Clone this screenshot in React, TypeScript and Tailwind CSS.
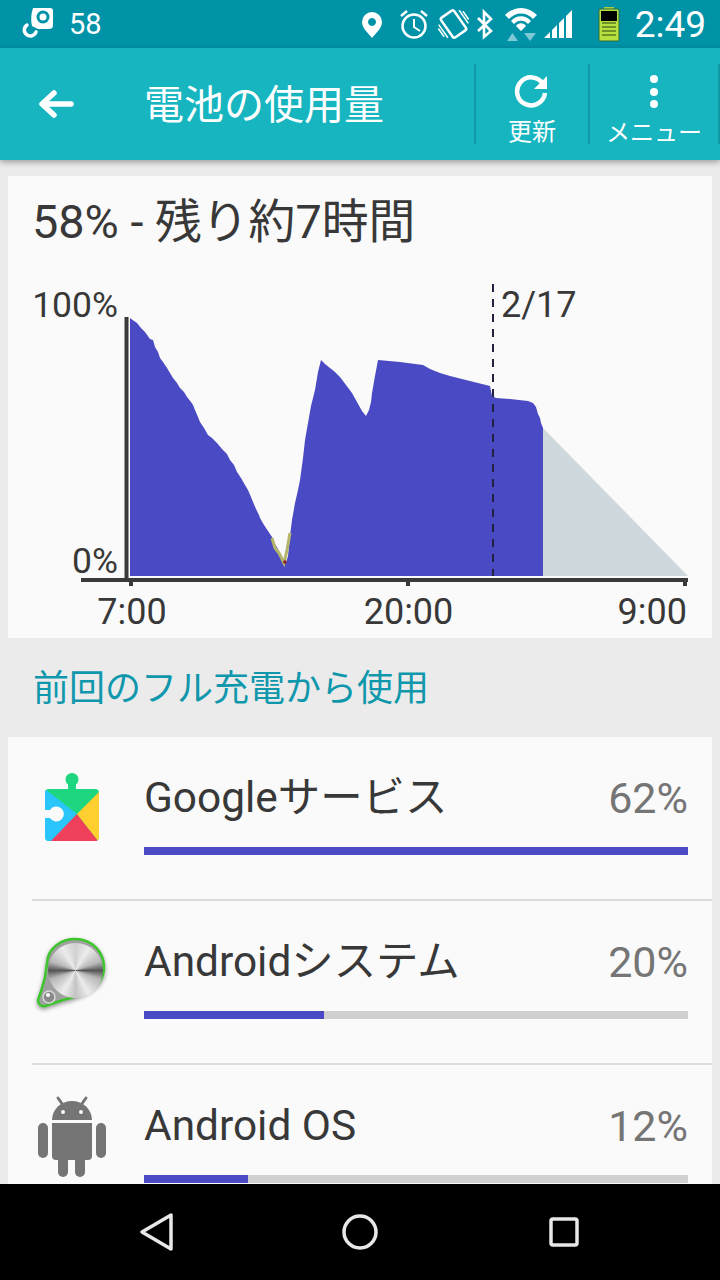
const font = "font-['Roboto','Noto_Sans_CJK_JP',sans-serif]";

const chartArea =
  "130,318 134,321 137,323 141,328 145,332 150,339 153,340 155,347 158,352 160,358 163,362 167,368 170,373 173,378 177,383 180,388 184,392 187,397 191,402 193,405 195,410 198,417 200,422 204,428 208,435 212,438 217,443 222,449 227,454 230,460 234,465 237,472 241,478 245,485 248,490 251,497 253,502 256,509 259,515 260,518 264,525 268,531 272,537 275,544 278,549 281,555 283,561 286,563 288,556 290,536 292,520 295,503 298,490 300,480 303,458 305,440 308,423 311,406 315,390 318,372 321,360 325,364 330,368 335,372 340,377 346,385 352,393 357,402 362,411 366,416 369,410 371,402 372,393 375,376 378,360 400,362 423,365 430,369 440,373 450,376 470,381 490,386 492,396 496,398 510,399 528,401 533,403 536,407 538,414 540,418 541,423 543,428 543,576 130,576";

function StatusLeft() {
  return (
    <svg width="36" height="48" viewBox="20 0 36 48">
      <path d="M33 8 H50 Q53 8 53 11 V25 Q53 29 49 29 H38 L32 26 Q30 17 33 8 Z" fill="#fff" />
      <circle cx="43" cy="17" r="6.5" fill="#0093a8" />
      <circle cx="43" cy="17" r="3.5" fill="#fff" />
      <path d="M27 25 A6 6 0 1 0 36 32" fill="none" stroke="#fff" strokeWidth="3.5" strokeLinecap="round" />
    </svg>
  );
}

function StatusIcons() {
  return (
    <svg width="268" height="48" viewBox="356 0 268 48">
      {/* location */}
      <path fillRule="evenodd" d="M372 12 a10 10 0 0 1 10 10 c0 6 -6 11 -10 16 c-4 -5 -10 -10 -10 -16 a10 10 0 0 1 10 -10 Z M372 18 a4 4 0 1 0 0.01 0 Z" fill="#fff" />
      {/* alarm */}
      <circle cx="414" cy="26" r="11.5" fill="none" stroke="#fff" strokeWidth="2.5" />
      <path d="M414 19 V27 L420 31" fill="none" stroke="#fff" strokeWidth="2" />
      <path d="M401 16 L407 11 M427 16 L421 11" stroke="#fff" strokeWidth="2.5" />
      {/* vibrate */}
      <g transform="rotate(-35 453.500 24)" fill="none" stroke="#fff">
        <rect x="445.500" y="12" width="16" height="24" rx="2" strokeWidth="2.5" />
        <path d="M441 16 V32 M438.500 19 V29 M466 16 V32 M468.500 19 V29" strokeWidth="1.5" />
      </g>
      {/* bluetooth */}
      <path d="M478 18 L491 31 L484 37 V12 L491 19 L478 31" fill="none" stroke="#fff" strokeWidth="2.6" />
      {/* wifi */}
      <path d="M505 15 A22 22 0 0 1 537 15 L533 19 A16 16 0 0 0 509 19 Z M511 21 A13 13 0 0 1 531 21 L528 24 A9 9 0 0 0 514 24 Z M516 26 A6 6 0 0 1 526 26 L521 31 Z" fill="#fff" />
      <path d="M512.500 33 L507 41 H518 Z M530 41 L524 33 H536 Z" fill="#7cc8d4" />
      {/* signal */}
      <path d="M544 38 L550 32 V38 Z M552 38 V30 L557 25 V38 Z M559 38 V23 L564 18 V38 Z M566 38 V16 L572 10 V38 Z" fill="#fff" />
      {/* battery */}
      <rect x="604" y="7" width="10" height="3" fill="#a8d040" />
      <rect x="599" y="9" width="20" height="32" rx="1" fill="#b5e040" stroke="#2f6b40" />
      <rect x="601" y="11" width="16" height="10" fill="#000" />
      <path d="M602 23 H616 M602 27 H616 M602 31 H616 M602 35 H616" stroke="#5a7a20" strokeWidth="1.4" />
    </svg>
  );
}

function BatteryChart() {
  const labelClass = "fill-[#383838]";
  return (
    <svg width="704" height="358" viewBox="8 280 704 358" className="block">
      <polygon points={chartArea} fill="#4a4ac4" />
      <polygon points="543,428 688,576 543,576" fill="#cfd8dc" />
      <polyline points="272,538 275,548 279,553 284,563 287,550 290,533" fill="none" stroke="#b5b56a" strokeWidth="3" />
      <circle cx="285" cy="562" r="1.800" fill="#8b1a2a" />
      <path d="M126.500 317 V582" stroke="#3a3a3a" strokeWidth="4" />
      <path d="M81 580 H688" stroke="#3a3a3a" strokeWidth="4" />
      <path d="M131 582 V586 M408 582 V586 M685 582 V586" stroke="#3a3a3a" strokeWidth="4" />
      <path d="M493 284 V576" stroke="#222240" strokeWidth="2" strokeDasharray="8 7" />
      <text x="118" y="317" textAnchor="end" fontSize="35.500" className={labelClass}>100%</text>
      <text x="118" y="573" textAnchor="end" fontSize="35.500" className={labelClass}>0%</text>
      <text x="501" y="317" fontSize="36" className={labelClass}>2/17</text>
      <text x="132" y="624" textAnchor="middle" fontSize="36" className={labelClass}>7:00</text>
      <text x="408.500" y="624" textAnchor="middle" fontSize="36" className={labelClass}>20:00</text>
      <text x="687" y="624" textAnchor="end" fontSize="36" className={labelClass}>9:00</text>
    </svg>
  );
}

function PlayServicesIcon() {
  return (
    <svg width="80" height="88" viewBox="32 766 80 88">
      <defs>
        <clipPath id="puzzle">
          <path d="M49 789 H68 V784.500 A6.500 6.500 0 1 1 76 784.500 V789 H95 Q99 789 99 793 V837 Q99 841 95 841 H49 Q45 841 45 837 V793 Q45 789 49 789 Z" />
        </clipPath>
      </defs>
      <g clipPath="url(#puzzle)">
        <rect x="45" y="770" width="54" height="72" fill="#1ed67f" />
        <polygon points="45,789 77,814 52,842 45,842" fill="#29c5fb" />
        <polygon points="50,842 77,814 99,842" fill="#f0405c" />
        <polygon points="99,792 77,814 99,842" fill="#ffd02f" />
      </g>
      <path d="M44 810 H50 A7.500 7.500 0 1 1 50 818 H44 Z" fill="#fafafa" />
    </svg>
  );
}

function AndroidSystemIcon() {
  return (
    <div className="relative w-[80px] h-[88px]">
      <svg width="80" height="88" viewBox="32 930 80 88" className="drop-shadow-[0_2px_2px_rgba(0,0,0,0.4)]">
        <path d="M75 939 C92 939 104 952 104 967 C104 977 99 984 92 988 C84 994 72 998 63 1000 C57 1002 51 1004 45 1006 C41 1007 38 1004 38 1000 C41 992 43 985 45 977 C46 970 47 963 48 957 C51 947 62 939 75 939 Z" fill="#a0a0a0" stroke="#3cc62c" strokeWidth="2.500" />
        <circle cx="49" cy="997" r="6" fill="#8a8a8a" stroke="#d8d8d8" strokeWidth="1.500" />
        <circle cx="48" cy="995" r="2" fill="#fff" />
      </svg>
      <div className="absolute left-[16px] top-[13px] w-[55px] h-[55px] rounded-full bg-[conic-gradient(#d0d0d0,#ececec_30deg,#b8b8b8_70deg,#555_90deg,#b8b8b8_110deg,#ececec_150deg,#c4c4c4_180deg,#ececec_210deg,#b8b8b8_250deg,#555_270deg,#b8b8b8_290deg,#ececec_330deg,#d0d0d0)]" />
    </div>
  );
}

function AndroidOsIcon() {
  return (
    <svg width="80" height="88" viewBox="32 1094 80 88" fill="#757575">
      <path d="M58 1098 L63 1105 M86 1098 L81 1105" stroke="#757575" strokeWidth="3" strokeLinecap="round" />
      <path d="M52 1120 A20 19 0 0 1 92 1120 Z" />
      <circle cx="63" cy="1112" r="2" fill="#fafafa" />
      <circle cx="81" cy="1112" r="2" fill="#fafafa" />
      <path d="M52 1123 H92 V1156 Q92 1160 88 1160 H56 Q52 1160 52 1156 Z" />
      <rect x="38" y="1123" width="10" height="35" rx="5" />
      <rect x="96" y="1123" width="10" height="35" rx="5" />
      <rect x="58" y="1150" width="10" height="27" rx="5" />
      <rect x="75" y="1150" width="10" height="27" rx="5" />
    </svg>
  );
}

const usageRows = [
  { name: "Googleサービス", pct: "62%", bar: "w-full", icon: <PlayServicesIcon /> },
  { name: "Androidシステム", pct: "20%", bar: "w-[180px]", icon: <AndroidSystemIcon /> },
  { name: "Android OS", pct: "12%", bar: "w-[104px]", icon: <AndroidOsIcon /> },
];

export default function App() {
  return (
    <div className={`${font} w-[720px] h-[1280px] flex flex-col overflow-hidden bg-[#ebebeb]`}>
      {/* status bar */}
      <div className="h-12 shrink-0 bg-[#0093a8] flex items-center pl-5 pr-[14px] text-white">
        <StatusLeft />
        <span className="ml-[13px] text-[29px] leading-none">58</span>
        <div className="ml-auto flex items-center">
          <StatusIcons />
          <span className="ml-[11px] text-[37px] leading-none">2:49</span>
        </div>
      </div>

      {/* app bar */}
      <div className="relative z-10 h-[112px] shrink-0 bg-[#16b5c0] shadow-[0_2px_6px_rgba(0,0,0,0.35)] flex items-center text-white">
        <svg width="36" height="32" viewBox="0 0 36 32" className="ml-[38px]">
          <path d="M33 16 H5 M16 5 L4 16 L16 27" fill="none" stroke="#fff" strokeWidth="5.500" strokeLinecap="round" strokeLinejoin="round" />
        </svg>
        <h1 className="ml-[70px] w-[330px] text-[40px] font-normal leading-none pt-[3px] whitespace-nowrap">電池の使用量</h1>
        <div className="h-20 w-[114px] border-l-2 border-[#0f9aa5] flex flex-col items-center">
          <svg width="36" height="36" viewBox="0 0 36 36" className="mt-[9px]">
            <path d="M29 11 A14 14 0 1 0 31 20" fill="none" stroke="#fff" strokeWidth="4.500" />
            <path d="M33 3 V16 H20 Z" fill="#fff" />
          </svg>
          <span className="mt-[11px] text-[24px] leading-none">更新</span>
        </div>
        <div className="h-20 w-[132px] border-x-2 border-[#0f9aa5] flex flex-col items-center">
          <div className="mt-[11px] flex flex-col gap-[4.500px]">
            <span className="w-2 h-2 rounded-full bg-white" />
            <span className="w-2 h-2 rounded-full bg-white" />
            <span className="w-2 h-2 rounded-full bg-white" />
          </div>
          <span className="mt-[13px] text-[24px] leading-none whitespace-nowrap">メニュー</span>
        </div>
      </div>

      {/* battery card */}
      <div className="mt-4 mx-2 h-[462px] shrink-0 bg-[#fafafa]">
        <h2 className="pl-[24px] pt-[22px] h-[104px] text-[46.800px] leading-[48px] text-[#383838] font-normal whitespace-nowrap">58% - 残り約7時間</h2>
        <BatteryChart />
      </div>

      <div className="h-[99px] shrink-0 pl-[33px] pt-[2px] flex items-center text-[36px] text-[#0f97ab]">前回のフル充電から使用</div>

      {/* usage list */}
      <div className="mx-2 flex-1 min-h-0 overflow-hidden bg-[#fafafa]">
        {usageRows.map((row) => (
          <div key={row.name} className="ml-6 flex h-[164px] border-b-2 border-[#dcdcdc]">
            <div className="w-[112px] shrink-0 pt-[29px]">{row.icon}</div>
            <div className="flex-1 pr-6 pt-[37px]">
              <div className="flex justify-between h-[48px] items-center text-[42.400px] leading-none text-[#383838]">
                <span>{row.name}</span>
                <span className="text-[43px] text-[#757575]">{row.pct}</span>
              </div>
              <div className="mt-[25px] h-2 bg-[#d0d0d0]">
                <div className={`h-full bg-[#4a4ac4] ${row.bar}`} />
              </div>
            </div>
          </div>
        ))}
      </div>

      {/* nav bar */}
      <div className="h-24 shrink-0 bg-black flex items-center pl-[138px]">
        <svg width="36" height="40" viewBox="0 0 36 40">
          <path d="M33 3 V37 L4 20 Z" fill="none" stroke="#e8e8e8" strokeWidth="3.500" strokeLinejoin="round" />
        </svg>
        <svg width="36" height="36" viewBox="0 0 36 36" className="ml-[168px]">
          <circle cx="18" cy="18" r="16" fill="none" stroke="#e8e8e8" strokeWidth="3.500" />
        </svg>
        <svg width="32" height="32" viewBox="0 0 32 32" className="ml-[170px]">
          <rect x="3" y="3" width="26" height="26" rx="2" fill="none" stroke="#e8e8e8" strokeWidth="3.500" />
        </svg>
      </div>
    </div>
  );
}
